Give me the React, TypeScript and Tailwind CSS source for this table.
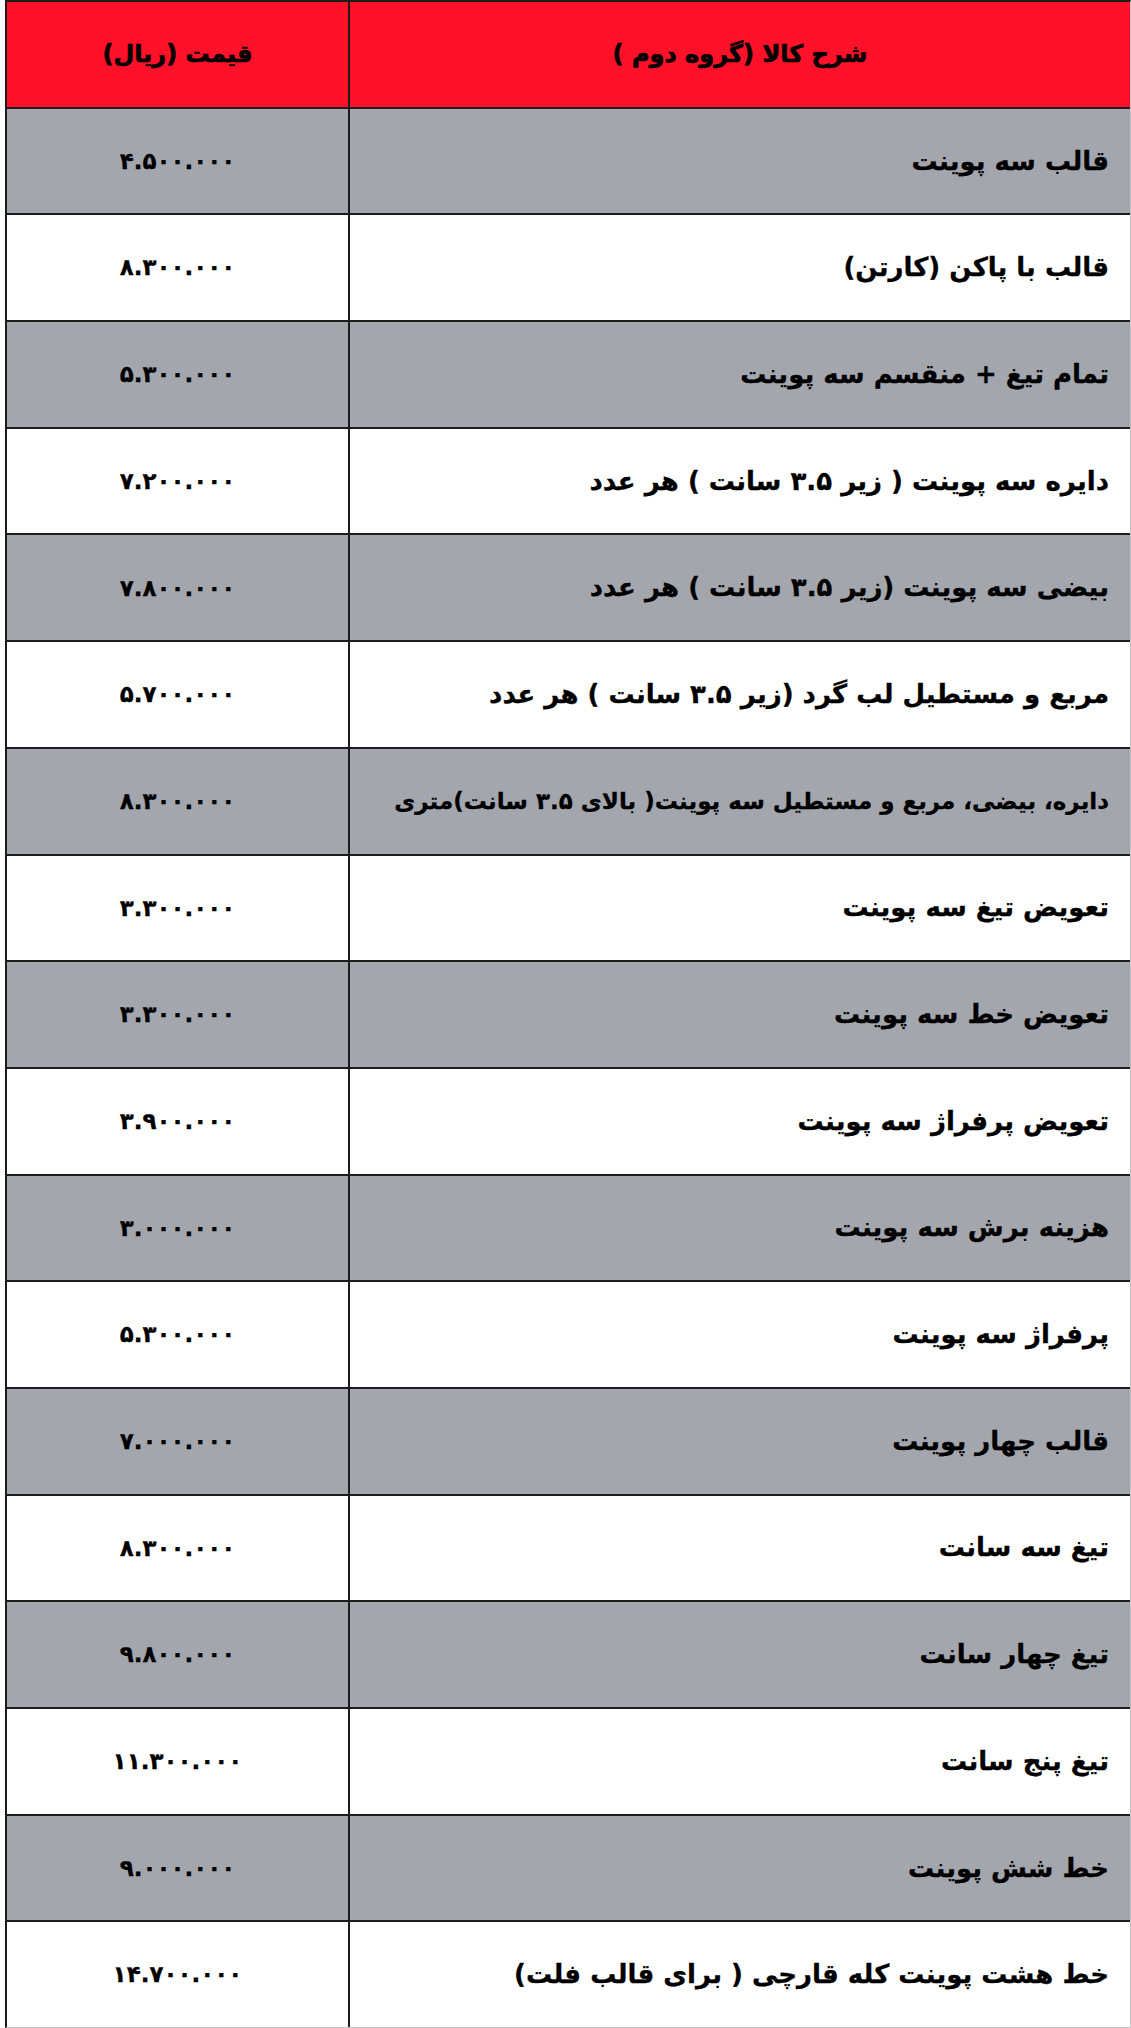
const rows = [
  ["قالب سه پوینت", "۴.۵۰۰.۰۰۰"],
  ["قالب با پاکن (کارتن)", "۸.۳۰۰.۰۰۰"],
  ["تمام تیغ + منقسم سه پوینت", "۵.۳۰۰.۰۰۰"],
  ["دایره سه پوینت ( زیر ۳.۵ سانت ) هر عدد", "۷.۲۰۰.۰۰۰"],
  ["بیضی سه پوینت (زیر ۳.۵ سانت ) هر عدد", "۷.۸۰۰.۰۰۰"],
  ["مربع و مستطیل لب گرد (زیر ۳.۵ سانت ) هر عدد", "۵.۷۰۰.۰۰۰"],
  ["دایره، بیضی، مربع و مستطیل سه پوینت( بالای ۳.۵ سانت)متری", "۸.۳۰۰.۰۰۰"],
  ["تعویض تیغ سه پوینت", "۳.۳۰۰.۰۰۰"],
  ["تعویض خط سه پوینت", "۳.۳۰۰.۰۰۰"],
  ["تعویض پرفراژ سه پوینت", "۳.۹۰۰.۰۰۰"],
  ["هزینه برش سه پوینت", "۳.۰۰۰.۰۰۰"],
  ["پرفراژ سه پوینت", "۵.۳۰۰.۰۰۰"],
  ["قالب چهار پوینت", "۷.۰۰۰.۰۰۰"],
  ["تیغ سه سانت", "۸.۳۰۰.۰۰۰"],
  ["تیغ چهار سانت", "۹.۸۰۰.۰۰۰"],
  ["تیغ پنج سانت", "۱۱.۳۰۰.۰۰۰"],
  ["خط شش پوینت", "۹.۰۰۰.۰۰۰"],
  ["خط هشت پوینت کله قارچی ( برای قالب فلت)", "۱۴.۷۰۰.۰۰۰"],
] as const;

export default function App() {
  return (
    <div className="w-[1131px] h-[2028px] bg-white pl-[5px] font-['DejaVu_Sans',sans-serif] font-bold text-black">
      <div className="flex h-full flex-col border-t-2 border-l-2 border-[#1c1c1c] border-r border-r-[#c4c4c4] border-b border-b-[#c4c4c4]">
        {/* header */}
        <div className="grid flex-1 grid-cols-[343px_1fr] border-b-2 border-[#1c1c1c] bg-[#ff1229] [-webkit-text-stroke:0.7px_black]">
          <div className="flex items-center justify-center border-r-2 border-[#1c1c1c] text-[24px]" dir="rtl">
            قیمت (ریال)
          </div>
          <div className="flex items-center justify-center text-[24px]" dir="rtl">
            شرح کالا (گروه دوم )
          </div>
        </div>
        {rows.map(([desc, price], i) => (
          <div
            key={i}
            className={`grid flex-1 grid-cols-[343px_1fr] [-webkit-text-stroke:0.3px_black] ${i < rows.length - 1 ? "border-b-2 border-[#1c1c1c]" : ""} ${i % 2 === 0 ? "bg-[#a3a6ad]" : "bg-white"}`}
          >
            <div className="flex items-center justify-center border-r-2 border-[#1c1c1c] text-[23px]">
              {price}
            </div>
            <div
              dir="rtl"
              className={`flex items-center pr-[21px] ${i === 6 ? "text-[23px]" : "text-[26px]"}`}
            >
              {desc}
            </div>
          </div>
        ))}
      </div>
    </div>
  );
}
